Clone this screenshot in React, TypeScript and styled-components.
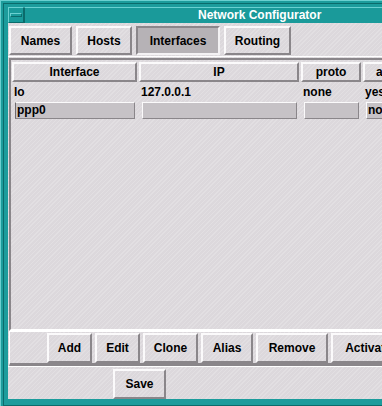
import styled, { createGlobalStyle } from "styled-components";

const GlobalStyle = createGlobalStyle`
  html, body {
    margin: 0;
    padding: 0;
    background: #1c9c9c;
  }
`;

const font = `"Liberation Sans", Arial, Helvetica, sans-serif`;
const face = "#dcd8dc";
const hatch = `repeating-linear-gradient(
  135deg,
  rgba(255, 255, 255, 0.18) 0px,
  rgba(255, 255, 255, 0.18) 1px,
  rgba(0, 0, 0, 0) 1px,
  rgba(0, 0, 0, 0) 3px
)`;

const Screen = styled.div`
  width: 382px;
  height: 406px;
  overflow: hidden;
`;

const Window = styled.div`
  width: 470px;
  height: 406px;
  box-sizing: border-box;
  padding: 7px 8px 7px 8px;
  display: flex;
  flex-direction: column;
  background: #1c9c9c;
  box-shadow: inset 1px 1px 0 #6ad0d0, inset 3px 3px 0 #1c9c9c,
    inset 4px 4px 0 #0b6b6b, inset 0 -1px 0 #0b6b6b;
`;

const TitleBar = styled.div`
  height: 16px;
  flex: none;
  display: flex;
  align-items: center;
  background: #1a9a9a;
`;

const CornerButton = styled.div`
  width: 16px;
  height: 16px;
  box-sizing: border-box;
  border: 1px solid;
  border-color: #6ad0d0 #0b6b6b #0b6b6b #6ad0d0;
  display: flex;
  align-items: center;
  justify-content: center;

  &::after {
    content: "";
    width: 10px;
    height: 2px;
    background: #1a9a9a;
    border: 1px solid;
    border-color: #6ad0d0 #0b6b6b #0b6b6b #6ad0d0;
  }
`;

const Title = styled.div`
  flex: 1;
  height: 16px;
  box-sizing: border-box;
  border-top: 1px solid #6ad0d0;
  border-left: 1px solid #0b6b6b;
  padding-left: 173px;
  font: bold 12px ${font};
  color: #ffffff;
  line-height: 15px;
  white-space: nowrap;
`;

const Content = styled.div`
  flex: 1;
  min-height: 0;
  display: flex;
  flex-direction: column;
  background: ${face};
  background-image: ${hatch};
`;

const TabRow = styled.div`
  flex: none;
  display: flex;
  gap: 4px;
  padding: 3px 0 0 1px;
  height: 34px;
  box-sizing: border-box;
  border-bottom: 1px solid #ffffff;
`;

const Button = styled.button<{ $w: number; $pressed?: boolean; $h?: number }>`
  width: ${(p) => p.$w}px;
  height: ${(p) => p.$h ?? 30}px;
  flex: none;
  margin: 0;
  padding: 0;
  box-sizing: border-box;
  font: bold 12px ${font};
  color: #000000;
  white-space: nowrap;
  overflow: hidden;
  background: ${(p) => (p.$pressed ? "#b6b2b6" : face)};
  background-image: ${(p) => (p.$pressed ? "none" : hatch)};
  border: 2px solid;
  border-color: ${(p) =>
    p.$pressed
      ? "#8a868a #f4f2f4 #f4f2f4 #8a868a"
      : "#fbfafb #8a868a #8a868a #fbfafb"};
`;

const TablePanel = styled.div`
  flex: 1;
  min-height: 0;
  margin: 1px 0 0 1px;
  border: 2px solid;
  border-color: #8a868a #8a868a #ffffff #8a868a;
  border-right: none;
  padding: 2px 0 0 1px;
`;

const Grid = styled.div`
  display: grid;
  grid-template-columns: 125px 160px 60px 60px;
  column-gap: 2px;
`;

const HeaderCell = styled.div`
  height: 20px;
  box-sizing: border-box;
  border: 2px solid;
  border-color: #fbfafb #8a868a #8a868a #fbfafb;
  font: bold 12px ${font};
  line-height: 16px;
  text-align: center;
  white-space: nowrap;
  overflow: hidden;
`;

const DataCell = styled.div`
  height: 19px;
  padding: 3px 0 0 2px;
  box-sizing: border-box;
  font: bold 12px ${font};
  line-height: 15px;
  white-space: nowrap;
  overflow: hidden;
`;

const FieldCell = styled.div`
  height: 20px;
  padding: 1px 2px 0 3px;
  box-sizing: border-box;
`;

const Field = styled.div<{ $focus?: boolean }>`
  height: 17px;
  box-sizing: border-box;
  background: #c6c2c6;
  border: 1px solid;
  border-color: #fbfafb #8a868a #8a868a
    ${(p) => (p.$focus ? "#6e6a6e" : "#fbfafb")};
  padding-left: 1px;
  font: bold 12px ${font};
  line-height: 14px;
  white-space: nowrap;
  overflow: hidden;
`;

const ButtonStrip = styled.div`
  flex: none;
  height: 35px;
  box-sizing: border-box;
  margin-left: 1px;
  display: flex;
  gap: 3px;
  padding: 1px 0 0 37px;
  border-top: 1px solid #ffffff;
  border-left: 1px solid #ffffff;
  border-bottom: 3px solid #8a868a;
`;

const BottomBar = styled.div`
  flex: none;
  height: 33px;
  box-sizing: border-box;
  display: flex;
  align-items: flex-end;
  padding-left: 105px;
  border-top: 1px solid #ffffff;
`;

const headers = ["Interface", "IP", "proto", "active"];
const rows = [["lo", "127.0.0.1", "none", "yes"]];
const editRow = ["ppp0", "", "", "no"];

const actions: [string, number][] = [
  ["Add", 45],
  ["Edit", 45],
  ["Clone", 55],
  ["Alias", 52],
  ["Remove", 72],
  ["Activate", 75],
];

const tabs: [string, number][] = [
  ["Names", 63],
  ["Hosts", 56],
  ["Interfaces", 84],
  ["Routing", 67],
];

export default function App() {
  return (
    <Screen>
      <GlobalStyle />
      <Window>
        <TitleBar>
          <CornerButton />
          <Title>Network Configurator</Title>
        </TitleBar>
        <Content>
          <TabRow>
            {tabs.map(([label, w]) => (
              <Button key={label} $w={w} $h={29} $pressed={label === "Interfaces"}>
                {label}
              </Button>
            ))}
          </TabRow>
          <TablePanel>
            <Grid>
              {headers.map((h) => (
                <HeaderCell key={h}>{h}</HeaderCell>
              ))}
              {rows.map((r) =>
                r.map((c, i) => <DataCell key={r[0] + i}>{c}</DataCell>)
              )}
              {editRow.map((c, i) => (
                <FieldCell key={"e" + i}>
                  <Field $focus={i === 0}>{c}</Field>
                </FieldCell>
              ))}
            </Grid>
          </TablePanel>
          <ButtonStrip>
            {actions.map(([label, w]) => (
              <Button key={label} $w={w}>
                {label}
              </Button>
            ))}
          </ButtonStrip>
          <BottomBar>
            <Button $w={53}>Save</Button>
          </BottomBar>
        </Content>
      </Window>
    </Screen>
  );
}
